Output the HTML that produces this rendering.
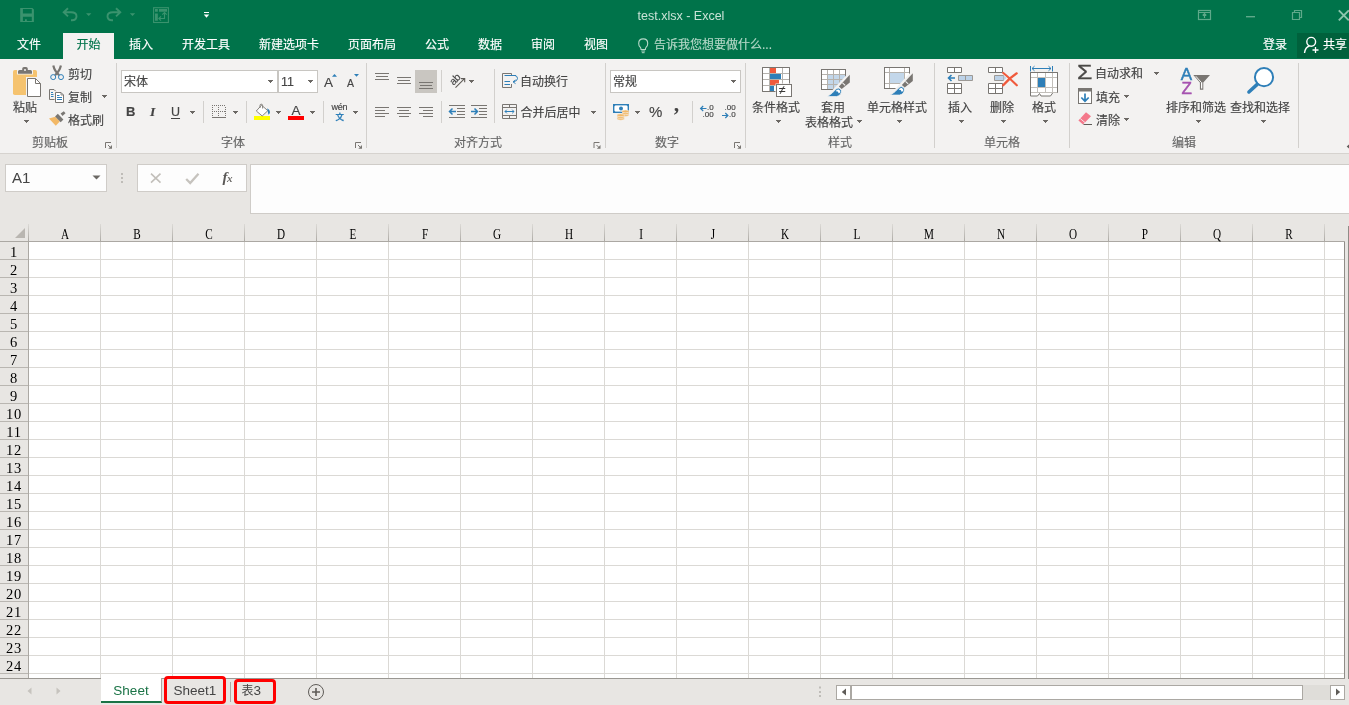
<!DOCTYPE html>
<html lang="zh-CN">
<head>
<meta charset="utf-8">
<title>test.xlsx - Excel</title>
<style>
*{box-sizing:border-box;margin:0;padding:0}
html,body{width:1349px;height:705px;overflow:hidden;background:#e8e6e3}
body{position:relative;will-change:transform;font-family:"Liberation Sans","Noto Sans CJK SC",sans-serif;font-size:12px;color:#444;line-height:1}
.abs,.t,.gl,.sep,.dd,#ribbon svg,#titlebar svg,#fbar svg,#tabsbar svg{position:absolute}
#titlebar{position:absolute;left:0;top:0;width:1349px;height:59px;background:#00734a}
.tab{position:absolute;top:33px;height:26px;line-height:25px;color:#fff;font-size:12px;white-space:nowrap;-webkit-text-stroke:.15px currentColor}
#ribbon{position:absolute;left:0;top:59px;width:1349px;height:94px;background:#f3f2f1}
#ribbonline{position:absolute;left:0;top:153px;width:1349px;height:1px;background:#d6d3cf}
.t{white-space:nowrap;color:#444;font-size:12px;line-height:14px;-webkit-text-stroke:.15px currentColor}
.gl{color:#666;top:77px}
.sep{width:1px;background:#d2d0cd}
.dd{width:5px;height:1px;background:#6b6864}
.dd::before,.dd::after{content:"";position:absolute;height:1px;background:#6b6864}
.dd::before{left:1px;top:1px;width:3px}
.dd::after{left:2px;top:2px;width:1px}
#fbar{position:absolute;left:0;top:154px;width:1349px;height:70px}
.box{position:absolute;background:#fdfdfd;border:1px solid #cfccc8}
#grid{position:absolute;left:0;top:224px;width:1349px;height:455px}
.ch{position:absolute;top:3px;width:72px;text-align:center;font-family:"Liberation Serif","Noto Serif CJK SC",serif;font-size:14px;line-height:16px;color:#000;transform:scaleX(.8)}
.rh{position:absolute;left:0;width:28px;text-align:center;padding-left:0;padding-top:1px;font-family:"Liberation Serif","Noto Serif CJK SC",serif;font-size:14.500px;line-height:18px;color:#000;letter-spacing:.75px}
#tabsbar{position:absolute;left:0;top:679px;width:1349px;height:26px}
</style>
</head>
<body>

<!-- ===== TITLE BAR ===== -->
<div id="titlebar">
  <div class="abs" style="left:0;top:8px;width:1362px;text-align:center;color:#c9e3d7;font-size:12.500px;line-height:16px">test.xlsx - Excel</div>
  <div class="abs" style="left:1297px;top:33px;width:52px;height:25px;background:#00613c"></div>
  <!--QAT-->
<svg style="left:0;top:0" width="1349" height="59" viewBox="0 0 1349 59" fill="none">
<!-- save -->
<path fill-rule="evenodd" fill="#3a936e" d="M20.200 8h12.200l1.500 1.500v12.400h-13.700zM22.900 9v4.600h8.900v-4.600zM22.900 16.800v4.200h2.100v-1.800h1.800v1.800h5v-4.200z"/>
<!-- undo -->
<path d="M68 8.200l-4.300 4.100 4.300 4.100M64 12.300h7q5.500 0 5.500 4t-4.500 4h-1" stroke="#3a936e" stroke-width="1.900"/>
<path d="M86 13.300h5.400l-2.700 2.700z" fill="#3a936e"/>
<!-- redo -->
<path d="M116 8.200l4.300 4.100-4.300 4.100M120 12.300h-7q-5.500 0-5.500 4t4.500 4h1" stroke="#3a936e" stroke-width="1.900"/>
<path d="M129.800 13.300h5.400l-2.700 2.700z" fill="#3a936e"/>
<!-- touch/mouse mode -->
<rect x="153.600" y="7.700" width="14.800" height="14.800" stroke="#3a936e" stroke-width="1.100"/>
<path d="M155 9h2.800v2.800h-2.800zM155 13.500h2.800v7.200h-2.800zM159 9h8v2.800h-8z" fill="#3a936e"/>
<path d="M164.500 12.500v6h-5.500M162.300 14.700l2.200-2.200 2.200 2.200M161 16.300l-2.200 2.200 2.200 2.200" stroke="#3a936e" stroke-width="1.100"/>
<!-- customize -->
<path d="M204 12.500h5" stroke="#fff" stroke-width="1"/>
<path d="M203.800 14.500h5.400l-2.700 3.200z" fill="#fff"/>
<!-- lightbulb -->
<path d="M640.200 47.200q-1.500-1.500-1.500-3.800 0-4.500 4.500-4.500t4.500 4.500q0 2.300-1.500 3.800-.8 .8-.8 2.300h-4.400q0-1.500-.8-2.300z" stroke="#b5d8c8" stroke-width="1.100"/>
<path d="M641.300 51h3.800M641.800 52.700h2.800" stroke="#b5d8c8" stroke-width="1"/>
<!-- share person -->
<circle cx="1311.200" cy="41.800" r="4.400" stroke="#fff" stroke-width="1.400"/>
<path d="M1304.500 53q.8-6 5-7" stroke="#fff" stroke-width="1.400"/>
<path d="M1315.500 47v6M1312.500 50h6" stroke="#fff" stroke-width="1.300"/>
<!-- window controls -->
<g stroke="#5fa98a" stroke-width="1.200">
<rect x="1198.500" y="10.500" width="12" height="9"/>
<path d="M1198.500 12.500h12M1204.500 18v-4M1202.700 15.500l1.800-1.800 1.800 1.800"/>
<path d="M1246 16.700h9" stroke-width="1.400"/>
<path d="M1292.500 12.500h7v7h-7zM1294.500 12.500v-2h7v7h-2"/>
</g>
<path d="M1338.800 10.300l10 10M1348.800 10.300l-10 10" stroke="#8cc5ad" stroke-width="1.900"/>
</svg>
<!--/QAT-->
  <!--WINCTL-->
  <div class="tab" style="left:17px">文件</div>
  <div class="tab" style="left:63px;width:51px;background:#f3f2f1;color:#00734a;text-align:center">开始</div>
  <div class="tab" style="left:129px">插入</div>
  <div class="tab" style="left:182px">开发工具</div>
  <div class="tab" style="left:259px">新建选项卡</div>
  <div class="tab" style="left:348px">页面布局</div>
  <div class="tab" style="left:425px">公式</div>
  <div class="tab" style="left:478px">数据</div>
  <div class="tab" style="left:531px">审阅</div>
  <div class="tab" style="left:584px">视图</div>
  <div class="tab" style="left:654px;color:#b5d8c8">告诉我您想要做什么...</div>
  <div class="tab" style="left:1263px">登录</div>
  <div class="tab" style="left:1323px">共享</div>
</div>

<!-- ===== RIBBON ===== -->
<div id="ribbon">
<!--RIBBON-->
<div id="rc" style="position:absolute;left:0;top:-59px;width:1349px;height:153px">
<!-- group separators -->
<div class="sep" style="left:116px;top:63px;height:85px"></div>
<div class="sep" style="left:366px;top:63px;height:85px"></div>
<div class="sep" style="left:605px;top:63px;height:85px"></div>
<div class="sep" style="left:745px;top:63px;height:85px"></div>
<div class="sep" style="left:934px;top:63px;height:85px"></div>
<div class="sep" style="left:1069px;top:63px;height:85px"></div>
<div class="sep" style="left:1298px;top:63px;height:85px"></div>
<!-- small separators -->
<div class="sep" style="left:203px;top:101px;height:22px"></div>
<div class="sep" style="left:246px;top:101px;height:22px"></div>
<div class="sep" style="left:323px;top:101px;height:22px"></div>
<div class="sep" style="left:441px;top:70px;height:22px"></div>
<div class="sep" style="left:441px;top:101px;height:22px"></div>
<div class="sep" style="left:494px;top:69px;height:54px"></div>
<div class="sep" style="left:692px;top:101px;height:22px"></div>
<!-- group labels -->
<div class="t" style="left:32px;top:136px;color:#666">剪贴板</div>
<div class="t" style="left:221px;top:136px;color:#666">字体</div>
<div class="t" style="left:454px;top:136px;color:#666">对齐方式</div>
<div class="t" style="left:655px;top:136px;color:#666">数字</div>
<div class="t" style="left:828px;top:136px;color:#666">样式</div>
<div class="t" style="left:984px;top:136px;color:#666">单元格</div>
<div class="t" style="left:1172px;top:136px;color:#666">编辑</div>
<!-- clipboard -->
<div class="t" style="left:13px;top:100.500px">粘贴</div>
<div class="dd" style="left:24px;top:120px"></div>
<div class="t" style="left:68px;top:68px">剪切</div>
<div class="t" style="left:68px;top:91px">复制</div>
<div class="dd" style="left:102px;top:95px"></div>
<div class="t" style="left:68px;top:114px">格式刷</div>
<!-- font -->
<div class="box" style="left:121px;top:70px;width:157px;height:23px;border-color:#c8c6c2;background:#fff"></div>
<div class="box" style="left:278px;top:70px;width:40px;height:23px;border-color:#c8c6c2;background:#fff"></div>
<div class="t" style="left:124px;top:75px">宋体</div>
<div class="dd" style="left:268px;top:80px"></div>
<div class="t" style="left:281px;top:75px;font-size:12.500px">11</div>
<div class="dd" style="left:308px;top:80px"></div>
<div class="t" style="left:126px;top:105px;font-weight:bold;font-size:13px">B</div>
<div class="t" style="left:150px;top:105px;font-style:italic;font-weight:bold;font-size:13.500px;font-family:'Liberation Serif',serif">I</div>
<div class="t" style="left:171px;top:105px;font-size:12.5px;text-decoration:underline;text-underline-offset:2px">U</div>
<div class="dd" style="left:190px;top:111px"></div>
<div class="dd" style="left:233px;top:111px"></div>
<div class="dd" style="left:276px;top:111px"></div>
<div class="dd" style="left:310px;top:111px"></div>
<div class="dd" style="left:353px;top:111px"></div>
<!-- alignment -->
<div class="abs" style="left:415px;top:70px;width:22px;height:23px;background:#c9c6c1"></div>
<div class="dd" style="left:469px;top:80px"></div>
<div class="t" style="left:520px;top:75px">自动换行</div>
<div class="t" style="left:520.500px;top:106px">合并后居中</div>
<div class="dd" style="left:591px;top:111px"></div>
<!-- number -->
<div class="box" style="left:610px;top:70px;width:131px;height:23px;border-color:#c8c6c2;background:#fff"></div>
<div class="t" style="left:613px;top:75px">常规</div>
<div class="dd" style="left:731px;top:80px"></div>
<div class="dd" style="left:635px;top:111px"></div>
<div class="t" style="left:649px;top:104px;font-size:15px;line-height:16px">%</div>
<div class="t" style="left:674px;top:93.500px;font-size:20px;line-height:20px;font-family:'Liberation Serif',serif;font-weight:bold">,</div>
<!-- styles -->
<div class="t" style="left:752px;top:100.500px">条件格式</div>
<div class="dd" style="left:776px;top:120px"></div>
<div class="t" style="left:821px;top:100.500px">套用</div>
<div class="t" style="left:805px;top:116px">表格格式</div>
<div class="dd" style="left:857px;top:120px"></div>
<div class="t" style="left:867px;top:100.500px">单元格样式</div>
<div class="dd" style="left:897px;top:120px"></div>
<!-- cells -->
<div class="t" style="left:948px;top:100.500px">插入</div>
<div class="dd" style="left:959px;top:120px"></div>
<div class="t" style="left:990px;top:100.500px">删除</div>
<div class="dd" style="left:1001px;top:120px"></div>
<div class="t" style="left:1032px;top:100.500px">格式</div>
<div class="dd" style="left:1043px;top:120px"></div>
<!-- editing -->
<div class="t" style="left:1095px;top:67px">自动求和</div>
<div class="dd" style="left:1154px;top:72px"></div>
<div class="t" style="left:1096px;top:91px">填充</div>
<div class="dd" style="left:1124px;top:95px"></div>
<div class="t" style="left:1096px;top:114px">清除</div>
<div class="dd" style="left:1124px;top:118px"></div>
<div class="t" style="left:1166px;top:100.500px">排序和筛选</div>
<div class="dd" style="left:1196px;top:120px"></div>
<div class="t" style="left:1230px;top:100.500px">查找和选择</div>
<div class="dd" style="left:1261px;top:120px"></div>
<!-- text-based icon parts -->
<div class="t" style="left:291.500px;top:104px;font-size:13.500px;line-height:14px">A</div>
<div class="t" style="left:324px;top:76px;font-size:13.500px;line-height:14px">A</div>
<div class="t" style="left:347px;top:77px;font-size:10.500px;line-height:12px">A</div>
<div class="t" style="left:331.500px;top:101px;font-size:9px;line-height:12px;letter-spacing:-.2px">wén</div>
<div class="t" style="left:335.500px;top:112px;font-size:8.500px;line-height:10px;color:#2e7fb8;font-weight:bold">文</div>
<div class="t" style="left:448.500px;top:73px;font-size:10.500px;line-height:12px;transform:rotate(-45deg);transform-origin:50% 50%;letter-spacing:-.3px">ab</div>
<div class="t" style="left:707px;top:103px;font-size:8px;line-height:9px">.0</div>
<div class="t" style="left:702.500px;top:110px;font-size:8px;line-height:9px">.00</div>
<div class="t" style="left:724.500px;top:103px;font-size:8px;line-height:9px">.00</div>
<div class="t" style="left:729px;top:110px;font-size:8px;line-height:9px">.0</div>
<div class="t" style="left:1180.800px;top:65px;font-size:17px;line-height:20px;-webkit-text-stroke:.5px #2e7fb8;color:#2e7fb8">A</div>
<div class="t" style="left:1181.500px;top:79px;font-size:17px;line-height:20px;-webkit-text-stroke:.5px #a653b0;color:#a653b0">Z</div>
<div class="t" style="left:779px;top:83px;font-size:12px;line-height:14px;color:#3b3a39;z-index:2">≠</div>
<div class="t" style="left:1077px;top:60px;font-size:21px;line-height:24px;color:#4a4846;transform:scaleX(1.18);transform-origin:0 0;-webkit-text-stroke:.3px #4a4846">Σ</div>
<svg style="left:0;top:0" width="1349" height="153" viewBox="0 0 1349 153" fill="none">
<!-- paste -->
<rect x="13" y="70" width="24" height="25" rx="1.8" fill="#f5c36f"/>
<path d="M17 69.5h16v5h-16z" fill="#f3f2f1"/>
<path d="M18 73.8v-2.3q0-1.5 1.5-1.5h2.7v-1.2q0-1.8 1.8-1.8h2q1.8 0 1.8 1.8v1.2h2.700q1.500 0 1.500 1.500v2.300z" fill="#797672"/>
<circle cx="25" cy="70" r="1" fill="#f3f2f1"/>
<path d="M26 77h11v18h-11z" fill="#f3f2f1"/>
<path d="M27.500 78.500h8l5 5v13h-13z" fill="#fff" stroke="#797672"/>
<path d="M35.500 78.500v5h5" stroke="#797672"/>
<!-- scissors -->
<path d="M53.300 65.500q1.200 5.500 5.900 9.800M60.900 65.500q-1.200 5.500-5.900 9.800" stroke="#797672" stroke-width="2.200"/>
<circle cx="53.200" cy="77.100" r="2.500" stroke="#2e7fb8" stroke-width="1"/>
<circle cx="61" cy="77.100" r="2.500" stroke="#2e7fb8" stroke-width="1"/>
<!-- copy -->
<path d="M54.500 99.500h-5v-10h4.500l1.700 1.700" stroke="#797672"/>
<path d="M55.500 92.500h5.500l2.500 2.500v7.500h-8z" fill="#fff" stroke="#797672"/>
<path d="M61 92.500v2.500h2.500" stroke="#797672" stroke-width=".8"/>
<path d="M51 92.500h2M51 94.500h2.500M51 96.500h2.500M57 95.500h2.500M57 97.500h5M57 99.500h5" stroke="#2e7fb8"/>
<!-- format painter -->
<path d="M49 118.600l6.300-1.900 4.500 4.800-4 4.300z" fill="#f2b866"/>
<path d="M57.800 113.800l5.600 5.800-2.700 2.600-5.600-5.800z" fill="#797672"/>
<path d="M60.600 113.600l3.200-2.300 1.700 2-3 2.600z" fill="#797672"/>
</svg>
<svg style="left:0;top:0" width="1349" height="153" viewBox="0 0 1349 153" fill="none">
<!-- border icon -->
<path d="M212 105.500h14M212 111.500h14M212.500 107v10M218.500 107v10M225.500 107v10" stroke="#797672" stroke-dasharray="1 1"/>
<path d="M212 117.500h14" stroke="#797672"/>
<!-- fill bucket -->
<rect x="254" y="116" width="16" height="4" fill="#ffff00"/>
<path d="M256.300 111l5.200-5.800 6.300 5.500-5.600 5.300z" fill="#fff" stroke="#797672" stroke-width=".9"/>
<path d="M260 108v-2.500q0-1.300 1.300-1.300t1.300 1.300v3" stroke="#797672" stroke-width=".9"/>
<path d="M267.200 108.300q2.800 1.500 2.800 3.800 0 1.800-1.600 2.700z" fill="#2e7fb8"/>
<!-- font colour bar -->
<rect x="288" y="116" width="16" height="4" fill="#ff0000"/>
<!-- grow/shrink triangles -->
<path d="M332 76.800l2.500-2.800 2.500 2.800z" fill="#2e7fb8"/>
<path d="M354 74l2.500 2.800 2.500-2.800z" fill="#2e7fb8"/>
<!-- align top/middle/bottom -->
<path d="M375 73.500h14M376 76.500h12M375 79.500h14" stroke="#797672"/>
<path d="M397 77.500h14M398 80.500h12M397 83.500h14" stroke="#797672"/>
<path d="M419 82.500h14M420 85.500h12M419 88.500h14" stroke="#797672"/>
<!-- align left/center/right -->
<path d="M375 107.500h14M375 110.500h10M375 113.500h14M375 116.500h10" stroke="#797672"/>
<path d="M397 107.500h14M399 110.500h10M397 113.500h14M399 116.500h10" stroke="#797672"/>
<path d="M419 107.500h14M423 110.500h10M419 113.500h14M423 116.500h10" stroke="#797672"/>
<!-- orientation arrow -->
<path d="M455.500 87.700l9-9M461 78.600h3.700v3.700" stroke="#5f5c58" stroke-width="1.100"/>
<!-- indent -->
<path d="M449 105.500h16M457 108.500h8M457 111.500h8M457 114.500h8M449 117.500h16" stroke="#797672"/>
<path d="M449.500 111.500h6.500M452.500 108.500l-3 3 3 3" stroke="#2e7fb8" stroke-width="1.500"/>
<path d="M471 105.500h16M479 108.500h8M479 111.500h8M479 114.500h8M471 117.500h16" stroke="#797672"/>
<path d="M471 111.500h6.500M474.500 108.500l3 3-3 3" stroke="#2e7fb8" stroke-width="1.500"/>
<!-- wrap text -->
<path d="M511.500 76v-2.500h-9v14h9v-3.500" stroke="#797672"/>
<path d="M504.500 75.500h11.500M504.500 81.500h5.500M504.500 84.500h5.500" stroke="#2e7fb8"/>
<path d="M515 75.500q2.500 .5 2.500 3t-4 3.300M515.500 80l-2.500 1.800 2.500 1.800" stroke="#2e7fb8"/>
<!-- merge -->
<path d="M502.500 104.500h14v14h-14zM502.500 107.500h14M502.500 115.500h14M509.500 104.500v3M509.500 115.500v3" stroke="#797672"/>
<path d="M505 111.500h9M506.800 109.700l-1.800 1.800 1.800 1.800M512.200 109.700l1.800 1.800-1.800 1.800" stroke="#2e7fb8"/>
</svg>
<svg style="left:0;top:0" width="1349" height="153" viewBox="0 0 1349 153" fill="none">
<!-- currency -->
<rect x="613.700" y="104.700" width="14.600" height="7.600" fill="#fff" stroke="#2e7fb8" stroke-width="1.400"/>
<circle cx="621" cy="108.500" r="2" fill="#2e7fb8"/>
<path d="M613.500 104.500h2.500l-2.500 2.500zM628.500 104.500h-2.500l2.500 2.500zM613.500 112.500h2.500l-2.500-2.500z" fill="#2e7fb8"/>
<g fill="#f2b866" stroke="#f3f2f1" stroke-width=".6">
<ellipse cx="625.500" cy="115" rx="3.600" ry="1.400"/><ellipse cx="625.500" cy="113.200" rx="3.600" ry="1.400"/><ellipse cx="625.500" cy="111.400" rx="3.600" ry="1.400"/>
<ellipse cx="620.700" cy="118.800" rx="3.800" ry="1.400"/><ellipse cx="620.700" cy="117" rx="3.800" ry="1.400"/><ellipse cx="620.700" cy="115.200" rx="3.800" ry="1.400"/>
</g>
<!-- decimals arrows -->
<path d="M700.500 108.500h6M703.200 106l-2.600 2.500 2.600 2.500" stroke="#2e7fb8" stroke-width="1.200"/>
<path d="M722 115.500h6M725.300 113l2.600 2.500-2.600 2.500" stroke="#2e7fb8" stroke-width="1.200"/>
<!-- conditional formatting -->
<path d="M762.500 67.500h27v24h-27z" fill="#fff" stroke="#797672"/>
<path d="M769.500 67.500v24M782.500 67.500v24M762.500 73.500h27M762.500 79.500h27M762.500 85.500h27" stroke="#b5b2ad"/>
<path d="M762.500 67.500h27v24h-27z" stroke="#797672"/>
<rect x="770" y="68" width="6" height="5" fill="#f05a3c"/>
<rect x="770" y="74" width="11" height="5" fill="#2e7fb8"/>
<rect x="770" y="80" width="9" height="5" fill="#f05a3c"/>
<rect x="770" y="86" width="4" height="5" fill="#2e7fb8"/>
<rect x="775.500" y="83.500" width="17" height="14" fill="#f3f2f1"/>
<rect x="776.500" y="84.500" width="15" height="12" fill="#fff" stroke="#797672"/>

<!-- format as table -->
<rect x="821.500" y="69.500" width="24" height="20" fill="#fff"/>
<rect x="828" y="75" width="17" height="14" fill="#c3d7ea"/>
<path d="M827.500 69.500v20M833.500 69.500v20M839.500 69.500v20M821.500 74.500h24M821.500 79.500h24M821.500 84.500h24" stroke="#b5b2ad"/>
<rect x="821.500" y="69.500" width="24" height="20" stroke="#797672"/>
<g>
<path d="M846.300 75.200l4.700-4.700v27.500h-25l6.500-8z" fill="#f3f2f1"/>
<path d="M849.800 74.700v7.700l-8.100 6.600-2.800-2.400z" fill="#797672"/>
<path d="M842.500 82.800l2.700 2.600" stroke="#f3f2f1" stroke-width="1.100"/>
<path d="M841.300 90.200q.4 5.300-4.800 6.400h-9.100q5.500-3.500 8.100-7 2.900-3.400 5.800 .6z" fill="#2e7fb8" stroke="#f3f2f1" stroke-width=".8"/>
<path d="M835.800 91.300q.8-2.300 3-1.800 1.500 .6 1.400 2.800l-1.300 1.300-1.200-2.200z" fill="#fff"/>
</g>
<!-- cell styles -->
<rect x="884.500" y="67.500" width="25" height="21" fill="#fff"/>
<rect x="890" y="73" width="14" height="10" fill="#c3d7ea"/>
<path d="M889.500 67.500v21M904.500 67.500v21M884.500 72.500h25M884.500 83.500h25" stroke="#b5b2ad"/>
<rect x="884.500" y="67.500" width="25" height="21" stroke="#797672"/>
<g transform="translate(63,-1.500)">
<path d="M846.300 75.200l4.700-4.700v27.500h-25l6.500-8z" fill="#f3f2f1"/>
<path d="M849.800 74.700v7.700l-8.100 6.600-2.800-2.400z" fill="#797672"/>
<path d="M842.500 82.800l2.700 2.600" stroke="#f3f2f1" stroke-width="1.100"/>
<path d="M841.300 90.200q.4 5.300-4.800 6.400h-9.100q5.500-3.500 8.100-7 2.900-3.400 5.800 .6z" fill="#2e7fb8" stroke="#f3f2f1" stroke-width=".8"/>
<path d="M835.800 91.300q.8-2.300 3-1.800 1.500 .6 1.400 2.800l-1.300 1.300-1.200-2.200z" fill="#fff"/>
</g>
</svg>
<svg style="left:0;top:0" width="1349" height="153" viewBox="0 0 1349 153" fill="none">
<!-- insert -->
<path d="M947.500 67.500h14v5h-14zM947.500 83.500h14v10h-14z" fill="#fff" stroke="#797672"/>
<path d="M954.500 67.500v5M954.500 83.500v10M947.500 88.500h14" stroke="#797672"/>
<path d="M958.500 75.500h14v5h-14z" fill="#bcd2e8" stroke="#9c9995"/>
<path d="M965.500 75.500v5" stroke="#9c9995"/>
<path d="M948.500 78h6.500M951.500 75l-3 3 3 3" stroke="#2e7fb8" stroke-width="1.600"/>
<!-- delete -->
<path d="M988.500 67.500h14v5h-14zM988.500 83.500h14v10h-14z" fill="#fff" stroke="#797672"/>
<path d="M995.500 67.500v5M995.500 83.500v10M988.500 88.500h14" stroke="#797672"/>
<path d="M994.500 75.500h9v5h-9z" fill="#bcd2e8" stroke="#9c9995"/>
<path d="M1003.500 75.500l3 2.500-3 2.500z" fill="#bcd2e8"/>
<path d="M1003.300 73q5 4 13.500 12.300M1016.700 73.300q-7 4.500-13.500 12" stroke="#f05a3c" stroke-width="2.200" stroke-linecap="round"/>
<!-- format -->
<path d="M1030.500 66v5.500M1052.500 66v5.500M1032 68.500h19M1034.500 66.200l-2.500 2.300 2.500 2.300M1048.500 66.200l2.500 2.300-2.500 2.300" stroke="#2e7fb8" stroke-width="1"/>
<path d="M1030.500 72.500h27v20l-4.500 0-2.500 3.500h-9.500l-1.500-2.500-2 2.500h-7z" fill="#fff" stroke="#797672"/>
<path d="M1037.500 72.500v20M1045.500 72.500v20M1052.500 72.500v20M1030.500 77.500h27M1030.500 87.500h27M1030.500 92.500h27" stroke="#c2bfba"/>
<path d="M1030.500 72.500h27v20" stroke="#797672"/>
<path d="M1030.500 72.500v23.500" stroke="#797672"/>
<rect x="1038" y="78" width="7" height="9" fill="#2e7fb8"/>
<!-- sigma: text -->
<!-- fill -->
<rect x="1078.500" y="88.500" width="13" height="15" fill="#fff" stroke="#797672"/>
<rect x="1078" y="88" width="14" height="3.500" fill="#797672"/>
<path d="M1085 93.500v7.500M1081.300 97.500l3.700 3.700 3.700-3.700" stroke="#2e7fb8" stroke-width="1.700"/>
<!-- clear -->
<path d="M1086 112.200l5 4-8 8.300-4.600-4z" fill="#f4798b"/>
<path d="M1080.200 118.500l5 4.200" stroke="#f3f2f1" stroke-width=".9"/>
<path d="M1083.500 124.500h8.500" stroke="#5f5c58"/>
<!-- funnel -->
<path d="M1193.300 75h16.700l-6.700 7.600v7.100h-3.400v-7.100z" fill="#797672"/>
<path d="M1195.800 76.200l5.300 6" stroke="#f3f2f1" stroke-width="1"/>
<path d="M1201 82.300h1.300v6.300h-1.300z" fill="#fff"/>
<!-- magnifier -->
<circle cx="1264" cy="77.200" r="9.100" fill="#fff" stroke="#2e7fb8" stroke-width="2"/>
<path d="M1257.200 84.400l-8.300 7.600" stroke="#2e7fb8" stroke-width="3.500" stroke-linecap="round"/>
<!-- dialog launchers -->
<g><path d="M105.500 148v-5.500h5.500" stroke="#797672" stroke-width="1"/><path d="M112 145v3.700h-3.700z" fill="#797672"/><path d="M108 145l2.500 2.500" stroke="#797672" stroke-width="1"/></g>
<g transform="translate(250,0)"><path d="M105.500 148v-5.500h5.500" stroke="#797672" stroke-width="1"/><path d="M112 145v3.700h-3.700z" fill="#797672"/><path d="M108 145l2.500 2.500" stroke="#797672" stroke-width="1"/></g><g transform="translate(488.500,0)"><path d="M105.500 148v-5.500h5.500" stroke="#797672" stroke-width="1"/><path d="M112 145v3.700h-3.700z" fill="#797672"/><path d="M108 145l2.500 2.500" stroke="#797672" stroke-width="1"/></g><g transform="translate(629,0)"><path d="M105.500 148v-5.500h5.500" stroke="#797672" stroke-width="1"/><path d="M112 145v3.700h-3.700z" fill="#797672"/><path d="M108 145l2.500 2.500" stroke="#797672" stroke-width="1"/></g>
<!-- collapse caret -->
<path d="M1349 144.500l-2.300 2 2.300 2z" fill="#5f5c58"/>
</svg>

</div>
<!--/RIBBON-->
</div>
<div id="ribbonline"></div>

<!-- ===== FORMULA BAR ===== -->
<div id="fbar">
  <div class="box" style="left:5px;top:10px;width:102px;height:28px"></div>
  <div class="abs" style="left:12px;top:16px;font-size:15px;line-height:16px;color:#444">A1</div>
  <svg style="left:92px;top:21px" width="9" height="5" viewBox="0 0 9 5"><path d="M.5 .5h8l-4 4z" fill="#6b6864"/></svg>
  <div class="box" style="left:137px;top:10px;width:110px;height:28px"></div>
  <div class="box" style="left:250px;top:10px;width:1110px;height:50px"></div>
<!--FBAR-->
<svg style="left:0;top:0" width="1349" height="70" viewBox="0 154 1349 70" fill="none">
<path d="M121.300 173h1.400v2h-1.400zM121.300 177h1.400v2h-1.400zM121.300 181h1.400v2h-1.400z" fill="#aeaba6"/>
<path d="M151 173.700l9.500 9M160.500 173.700l-9.500 9" stroke="#c2bfba" stroke-width="1.600"/>
<path d="M186.200 179l4 4 8.300-9.300" stroke="#c6c3be" stroke-width="2.300"/>
</svg>
<div class="abs" style="left:222.500px;top:15px;font-family:'Liberation Serif',serif;font-style:italic;font-weight:bold;font-size:15px;line-height:16px;color:#5a5856;letter-spacing:-.5px">f<span style="font-size:11px;color:#6e6c69">x</span></div>
<!--/FBAR-->
</div>

<!-- ===== GRID ===== -->
<div id="grid">
<!--GRID-->
<div class="abs" style="left:29px;top:18px;width:1315px;height:436px;background:#fff"></div>
<div class="abs" style="left:0;top:35px;width:28px;height:1px;background:#b9b6b1"></div><div class="abs" style="left:29px;top:35px;width:1315px;height:1px;background:#dbd9d5"></div>
<div class="abs" style="left:0;top:53px;width:28px;height:1px;background:#b9b6b1"></div><div class="abs" style="left:29px;top:53px;width:1315px;height:1px;background:#dbd9d5"></div>
<div class="abs" style="left:0;top:71px;width:28px;height:1px;background:#b9b6b1"></div><div class="abs" style="left:29px;top:71px;width:1315px;height:1px;background:#dbd9d5"></div>
<div class="abs" style="left:0;top:89px;width:28px;height:1px;background:#b9b6b1"></div><div class="abs" style="left:29px;top:89px;width:1315px;height:1px;background:#dbd9d5"></div>
<div class="abs" style="left:0;top:107px;width:28px;height:1px;background:#b9b6b1"></div><div class="abs" style="left:29px;top:107px;width:1315px;height:1px;background:#dbd9d5"></div>
<div class="abs" style="left:0;top:125px;width:28px;height:1px;background:#b9b6b1"></div><div class="abs" style="left:29px;top:125px;width:1315px;height:1px;background:#dbd9d5"></div>
<div class="abs" style="left:0;top:143px;width:28px;height:1px;background:#b9b6b1"></div><div class="abs" style="left:29px;top:143px;width:1315px;height:1px;background:#dbd9d5"></div>
<div class="abs" style="left:0;top:161px;width:28px;height:1px;background:#b9b6b1"></div><div class="abs" style="left:29px;top:161px;width:1315px;height:1px;background:#dbd9d5"></div>
<div class="abs" style="left:0;top:179px;width:28px;height:1px;background:#b9b6b1"></div><div class="abs" style="left:29px;top:179px;width:1315px;height:1px;background:#dbd9d5"></div>
<div class="abs" style="left:0;top:197px;width:28px;height:1px;background:#b9b6b1"></div><div class="abs" style="left:29px;top:197px;width:1315px;height:1px;background:#dbd9d5"></div>
<div class="abs" style="left:0;top:215px;width:28px;height:1px;background:#b9b6b1"></div><div class="abs" style="left:29px;top:215px;width:1315px;height:1px;background:#dbd9d5"></div>
<div class="abs" style="left:0;top:233px;width:28px;height:1px;background:#b9b6b1"></div><div class="abs" style="left:29px;top:233px;width:1315px;height:1px;background:#dbd9d5"></div>
<div class="abs" style="left:0;top:251px;width:28px;height:1px;background:#b9b6b1"></div><div class="abs" style="left:29px;top:251px;width:1315px;height:1px;background:#dbd9d5"></div>
<div class="abs" style="left:0;top:269px;width:28px;height:1px;background:#b9b6b1"></div><div class="abs" style="left:29px;top:269px;width:1315px;height:1px;background:#dbd9d5"></div>
<div class="abs" style="left:0;top:287px;width:28px;height:1px;background:#b9b6b1"></div><div class="abs" style="left:29px;top:287px;width:1315px;height:1px;background:#dbd9d5"></div>
<div class="abs" style="left:0;top:305px;width:28px;height:1px;background:#b9b6b1"></div><div class="abs" style="left:29px;top:305px;width:1315px;height:1px;background:#dbd9d5"></div>
<div class="abs" style="left:0;top:323px;width:28px;height:1px;background:#b9b6b1"></div><div class="abs" style="left:29px;top:323px;width:1315px;height:1px;background:#dbd9d5"></div>
<div class="abs" style="left:0;top:341px;width:28px;height:1px;background:#b9b6b1"></div><div class="abs" style="left:29px;top:341px;width:1315px;height:1px;background:#dbd9d5"></div>
<div class="abs" style="left:0;top:359px;width:28px;height:1px;background:#b9b6b1"></div><div class="abs" style="left:29px;top:359px;width:1315px;height:1px;background:#dbd9d5"></div>
<div class="abs" style="left:0;top:377px;width:28px;height:1px;background:#b9b6b1"></div><div class="abs" style="left:29px;top:377px;width:1315px;height:1px;background:#dbd9d5"></div>
<div class="abs" style="left:0;top:395px;width:28px;height:1px;background:#b9b6b1"></div><div class="abs" style="left:29px;top:395px;width:1315px;height:1px;background:#dbd9d5"></div>
<div class="abs" style="left:0;top:413px;width:28px;height:1px;background:#b9b6b1"></div><div class="abs" style="left:29px;top:413px;width:1315px;height:1px;background:#dbd9d5"></div>
<div class="abs" style="left:0;top:431px;width:28px;height:1px;background:#b9b6b1"></div><div class="abs" style="left:29px;top:431px;width:1315px;height:1px;background:#dbd9d5"></div>
<div class="abs" style="left:0;top:449px;width:28px;height:1px;background:#b9b6b1"></div><div class="abs" style="left:29px;top:449px;width:1315px;height:1px;background:#dbd9d5"></div>
<div class="abs" style="left:100px;top:0;width:1px;height:17px;background:linear-gradient(#dcdad6,#aeaba6)"></div><div class="abs" style="left:100px;top:18px;width:1px;height:436px;background:#dbd9d5"></div>
<div class="abs" style="left:172px;top:0;width:1px;height:17px;background:linear-gradient(#dcdad6,#aeaba6)"></div><div class="abs" style="left:172px;top:18px;width:1px;height:436px;background:#dbd9d5"></div>
<div class="abs" style="left:244px;top:0;width:1px;height:17px;background:linear-gradient(#dcdad6,#aeaba6)"></div><div class="abs" style="left:244px;top:18px;width:1px;height:436px;background:#dbd9d5"></div>
<div class="abs" style="left:316px;top:0;width:1px;height:17px;background:linear-gradient(#dcdad6,#aeaba6)"></div><div class="abs" style="left:316px;top:18px;width:1px;height:436px;background:#dbd9d5"></div>
<div class="abs" style="left:388px;top:0;width:1px;height:17px;background:linear-gradient(#dcdad6,#aeaba6)"></div><div class="abs" style="left:388px;top:18px;width:1px;height:436px;background:#dbd9d5"></div>
<div class="abs" style="left:460px;top:0;width:1px;height:17px;background:linear-gradient(#dcdad6,#aeaba6)"></div><div class="abs" style="left:460px;top:18px;width:1px;height:436px;background:#dbd9d5"></div>
<div class="abs" style="left:532px;top:0;width:1px;height:17px;background:linear-gradient(#dcdad6,#aeaba6)"></div><div class="abs" style="left:532px;top:18px;width:1px;height:436px;background:#dbd9d5"></div>
<div class="abs" style="left:604px;top:0;width:1px;height:17px;background:linear-gradient(#dcdad6,#aeaba6)"></div><div class="abs" style="left:604px;top:18px;width:1px;height:436px;background:#dbd9d5"></div>
<div class="abs" style="left:676px;top:0;width:1px;height:17px;background:linear-gradient(#dcdad6,#aeaba6)"></div><div class="abs" style="left:676px;top:18px;width:1px;height:436px;background:#dbd9d5"></div>
<div class="abs" style="left:748px;top:0;width:1px;height:17px;background:linear-gradient(#dcdad6,#aeaba6)"></div><div class="abs" style="left:748px;top:18px;width:1px;height:436px;background:#dbd9d5"></div>
<div class="abs" style="left:820px;top:0;width:1px;height:17px;background:linear-gradient(#dcdad6,#aeaba6)"></div><div class="abs" style="left:820px;top:18px;width:1px;height:436px;background:#dbd9d5"></div>
<div class="abs" style="left:892px;top:0;width:1px;height:17px;background:linear-gradient(#dcdad6,#aeaba6)"></div><div class="abs" style="left:892px;top:18px;width:1px;height:436px;background:#dbd9d5"></div>
<div class="abs" style="left:964px;top:0;width:1px;height:17px;background:linear-gradient(#dcdad6,#aeaba6)"></div><div class="abs" style="left:964px;top:18px;width:1px;height:436px;background:#dbd9d5"></div>
<div class="abs" style="left:1036px;top:0;width:1px;height:17px;background:linear-gradient(#dcdad6,#aeaba6)"></div><div class="abs" style="left:1036px;top:18px;width:1px;height:436px;background:#dbd9d5"></div>
<div class="abs" style="left:1108px;top:0;width:1px;height:17px;background:linear-gradient(#dcdad6,#aeaba6)"></div><div class="abs" style="left:1108px;top:18px;width:1px;height:436px;background:#dbd9d5"></div>
<div class="abs" style="left:1180px;top:0;width:1px;height:17px;background:linear-gradient(#dcdad6,#aeaba6)"></div><div class="abs" style="left:1180px;top:18px;width:1px;height:436px;background:#dbd9d5"></div>
<div class="abs" style="left:1252px;top:0;width:1px;height:17px;background:linear-gradient(#dcdad6,#aeaba6)"></div><div class="abs" style="left:1252px;top:18px;width:1px;height:436px;background:#dbd9d5"></div>
<div class="abs" style="left:1324px;top:0;width:1px;height:17px;background:linear-gradient(#dcdad6,#aeaba6)"></div><div class="abs" style="left:1324px;top:18px;width:1px;height:436px;background:#dbd9d5"></div>
<div class="abs" style="left:0;top:17px;width:1345px;height:1px;background:#aba8a3"></div>
<div class="abs" style="left:28px;top:0;width:1px;height:455px;background:linear-gradient(#dcdad6,#aba8a3 17px)"></div>
<div class="abs" style="left:1344px;top:18px;width:1px;height:437px;background:#8f8c87"></div>
<div class="abs" style="left:0;top:454px;width:1345px;height:1px;background:#9a9792"></div>
<div class="abs" style="left:1348px;top:2px;width:1px;height:453px;background:#8f8c87"></div>
<div class="abs" style="left:15px;top:4px;width:0;height:0;border-left:10px solid transparent;border-bottom:10px solid #b9b6b1"></div>
<div class="ch" style="left:29px">A</div>
<div class="ch" style="left:101px">B</div>
<div class="ch" style="left:173px">C</div>
<div class="ch" style="left:245px">D</div>
<div class="ch" style="left:317px">E</div>
<div class="ch" style="left:389px">F</div>
<div class="ch" style="left:461px">G</div>
<div class="ch" style="left:533px">H</div>
<div class="ch" style="left:605px">I</div>
<div class="ch" style="left:677px">J</div>
<div class="ch" style="left:749px">K</div>
<div class="ch" style="left:821px">L</div>
<div class="ch" style="left:893px">M</div>
<div class="ch" style="left:965px">N</div>
<div class="ch" style="left:1037px">O</div>
<div class="ch" style="left:1109px">P</div>
<div class="ch" style="left:1181px">Q</div>
<div class="ch" style="left:1253px">R</div>
<div class="rh" style="top:18px">1</div>
<div class="rh" style="top:36px">2</div>
<div class="rh" style="top:54px">3</div>
<div class="rh" style="top:72px">4</div>
<div class="rh" style="top:90px">5</div>
<div class="rh" style="top:108px">6</div>
<div class="rh" style="top:126px">7</div>
<div class="rh" style="top:144px">8</div>
<div class="rh" style="top:162px">9</div>
<div class="rh" style="top:180px">10</div>
<div class="rh" style="top:198px">11</div>
<div class="rh" style="top:216px">12</div>
<div class="rh" style="top:234px">13</div>
<div class="rh" style="top:252px">14</div>
<div class="rh" style="top:270px">15</div>
<div class="rh" style="top:288px">16</div>
<div class="rh" style="top:306px">17</div>
<div class="rh" style="top:324px">18</div>
<div class="rh" style="top:342px">19</div>
<div class="rh" style="top:360px">20</div>
<div class="rh" style="top:378px">21</div>
<div class="rh" style="top:396px">22</div>
<div class="rh" style="top:414px">23</div>
<div class="rh" style="top:432px">24</div>
<!--/GRID-->
</div>

<!-- ===== SHEET TABS ===== -->
<div id="tabsbar">
<!--TABS-->
<div class="abs" style="left:101px;top:-1px;width:61px;height:25px;background:#fff;border-bottom:2px solid #1a7346;border-right:1px solid #aba8a3"></div>
<div class="abs" style="left:100px;top:4px;width:62px;text-align:center;font-size:13.500px;line-height:15px;color:#1a7346">Sheet</div>
<div class="abs" style="left:173.500px;top:4px;font-size:13.500px;line-height:15px;color:#444">Sheet1</div>
<div class="abs" style="left:241.500px;top:4px;font-size:13.500px;line-height:15px;color:#444"><span style="font-size:12px">表</span>3</div>
<div class="abs" style="left:230px;top:3px;width:1px;height:20px;background:#aba8a3"></div>
<div class="abs" style="left:164px;top:-3px;width:62px;height:28px;border:3px solid #ff0000;border-radius:4px"></div>
<div class="abs" style="left:234px;top:0;width:42px;height:25px;border:3px solid #ff0000;border-radius:4px"></div>
<svg style="left:0;top:0" width="1349" height="26" viewBox="0 679 1349 26" fill="none">
<path d="M31.500 687.500v7l-4-3.500zM56.500 687.500v7l4-3.500z" fill="#c6c3be"/>
<circle cx="316" cy="692" r="7.500" stroke="#5f5c58" stroke-width="1"/>
<path d="M312 692h8M316 688v8" stroke="#5f5c58" stroke-width="1.600"/>
<path d="M819.300 686.500h1.400v2h-1.400zM819.300 691h1.400v2h-1.400zM819.300 695h1.400v2h-1.400z" fill="#aeaba6"/>
<rect x="836.500" y="685.500" width="14" height="14" fill="#fff" stroke="#aba8a3"/>
<rect x="851.500" y="685.500" width="451" height="14" fill="#fff" stroke="#aba8a3"/>
<rect x="1303" y="685" width="27" height="15" fill="#dfddd9"/>
<rect x="1330.500" y="685.500" width="14" height="14" fill="#fff" stroke="#aba8a3"/>
<path d="M846 688.500v7l-4.200-3.500zM1336 688.500v7l4.200-3.500z" fill="#5f5c58"/>
</svg>
<!--/TABS-->
</div>

</body>
</html>
